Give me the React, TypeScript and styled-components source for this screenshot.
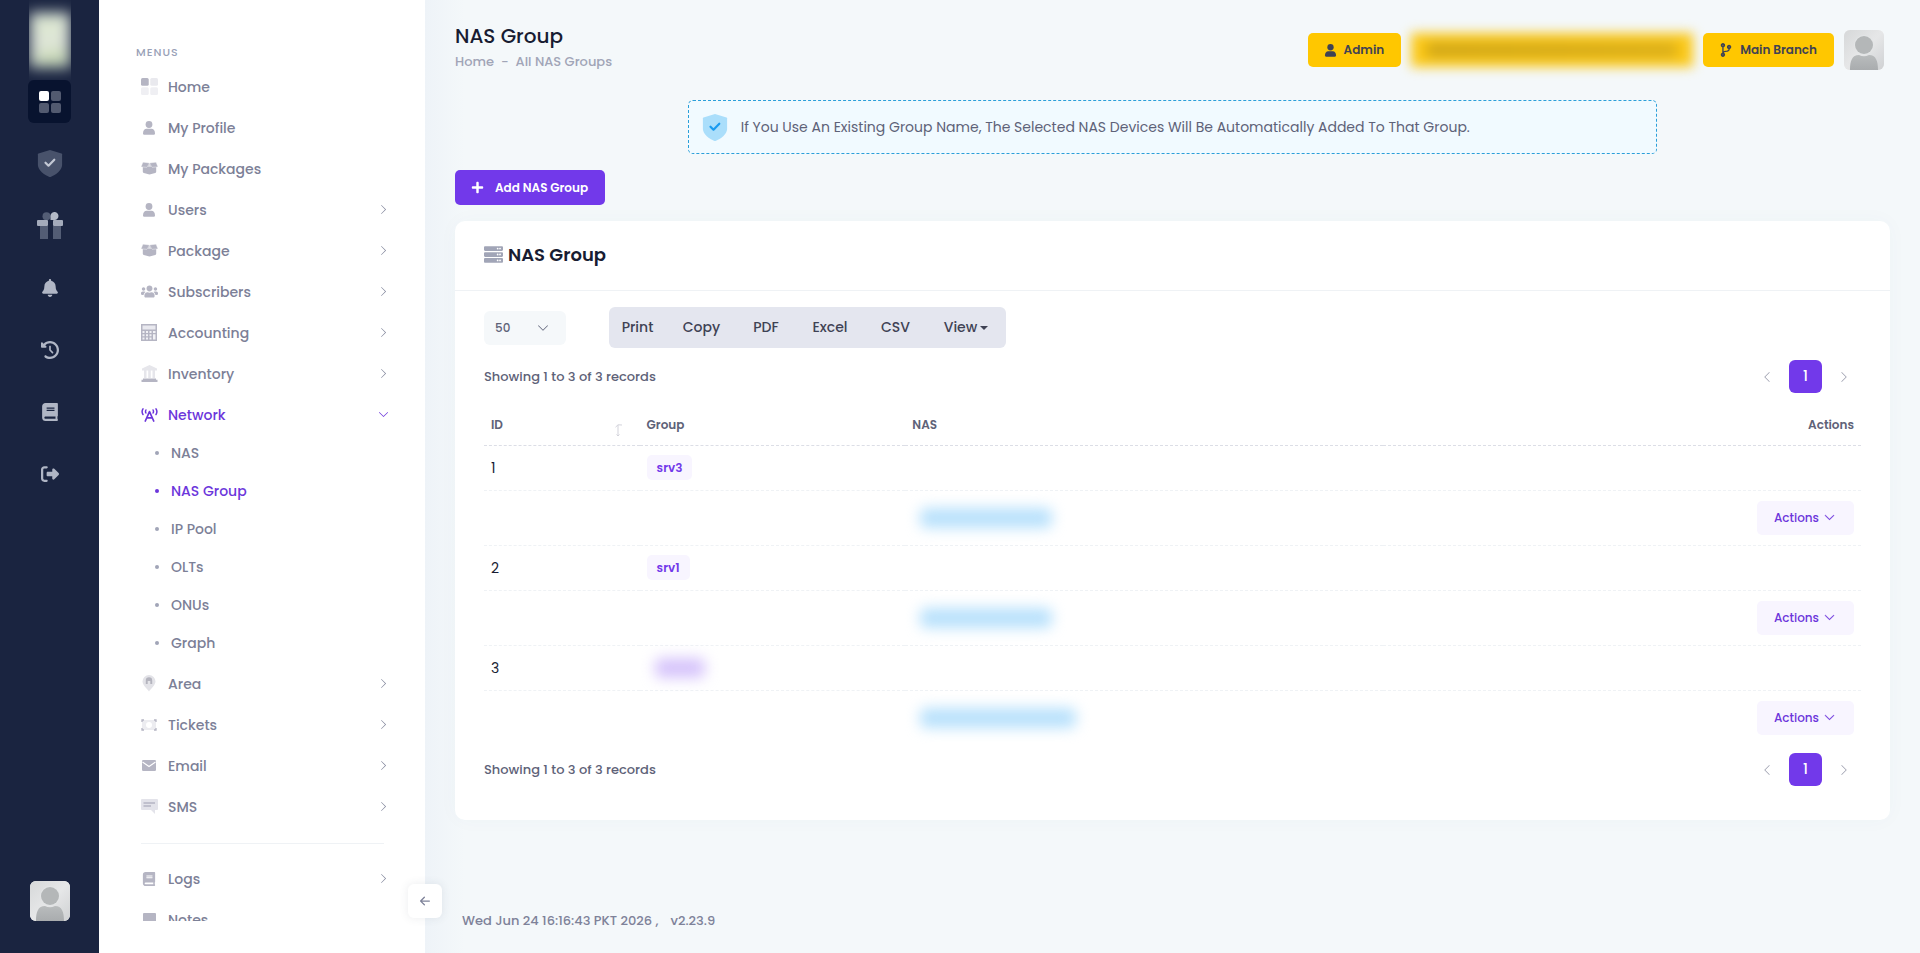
import React from "react";
import styled, { createGlobalStyle, css } from "styled-components";
import {
  FaBell,
  FaBook,
  FaCodeBranch,
  FaPlus,
  FaServer,
  FaUsers,
} from "react-icons/fa";
import { FaClockRotateLeft, FaRightFromBracket } from "react-icons/fa6";
import { BsArrowLeftShort, BsChevronDown, BsChevronLeft, BsChevronRight } from "react-icons/bs";

const GlobalStyle = createGlobalStyle`
  *, *::before, *::after { box-sizing: border-box; }
  body {
    margin: 0;
    background: #f4f8fa;
    color: #181c32;
    font-family: Poppins, Inter, "Liberation Sans", sans-serif;
    font-size: 14px;
    line-height: 20px;
  }
  button, select { font-family: inherit; }
  button { border: 0; cursor: pointer; }
  a { color: inherit; text-decoration: none; }
  ul { list-style: none; margin: 0; padding: 0; }
  h1, h2, p { margin: 0; }
  svg { display: block; flex: none; }
`;

/* ---------- icons ---------- */

type GridIconProps = { size: number; bright: string; dim: string; faint?: string };

const GridIcon = ({ size, bright, dim, faint = dim }: GridIconProps) => (
  <svg width={size} height={size} viewBox="0 0 22 22" aria-hidden="true">
    <rect width="10" height="10" rx="2" fill={bright} />
    <rect x="12" width="10" height="10" rx="2" fill={dim} />
    <rect y="12" width="10" height="10" rx="2" fill={faint} />
    <rect x="12" y="12" width="10" height="10" rx="2" fill={faint} />
  </svg>
);

const ShieldIcon = ({ base, tick }: { base: string; tick: string }) => (
  <svg width="26" height="27" viewBox="0 0 26 27" aria-hidden="true">
    <path d="M13 0 24.500 3.400q.6.2.6.8V15c0 5-6.500 10-11.500 12q-.6.2-1.200 0C7.400 25 .9 20 .9 15V4.200q0-.6.6-.8z" fill={base} />
    <path d="m8.500 12.700 3 3 5.800-6" fill="none" stroke={tick} strokeWidth="2.200" strokeLinecap="round" strokeLinejoin="round" />
  </svg>
);

const GiftIcon = () => (
  <svg width="26" height="28" viewBox="0 0 26 28" aria-hidden="true">
    <circle cx="9.500" cy="4.200" r="4" fill="#535d75" />
    <path d="M13.500 8V4.500A4 4 0 1 1 17.500 8z" fill="#b4bac8" />
    <path d="M3 14h8v13H3zM16 14h8v13h-8z" fill="#535d75" />
    <rect y="8" width="11" height="6" rx="1" fill="#a4abbb" />
    <rect x="16" y="8" width="10" height="6" rx="1" fill="#a4abbb" />
  </svg>
);

const UserIcon = ({ size = 14 }: { size?: number }) => (
  <svg width={size} height={size} viewBox="0 0 14 14" aria-hidden="true">
    <circle cx="7" cy="3.500" r="3.400" fill="currentColor" />
    <path d="M1 12.500C1 9.500 2.500 7.800 4.500 7.800h5c2 0 3.500 1.700 3.500 4.700q0 1.200-1.200 1.200H2.200Q1 13.700 1 12.500z" fill="currentColor" />
  </svg>
);

const OpenBoxIcon = () => (
  <svg width="17" height="13" viewBox="0 0 17 13" aria-hidden="true">
    <path d="M1.800 1.200h13.400v8.600q0 1-1 1.300l-4.700 1.200q-1 .3-2 0l-4.700-1.200q-1-.3-1-1.300z" fill="currentColor" />
    <path d="M.3 4.300 1.800.6q.2-.4.7-.4L8.500 1 6.300 4.900q-.3.6-.9.4L.6 4.900q-.5-.1-.3-.6zM16.700 4.300 15.200.6q-.2-.4-.7-.4L8.500 1l2.200 3.900q.3.600.9.4l4.800-.4q.5-.1.300-.6z" fill="currentColor" stroke="#fff" strokeWidth=".4" />
    <path d="M8.500 1.800 6.800 4.800h3.400z" fill="#fff" opacity=".6" />
  </svg>
);

const CalculatorIcon = () => (
  <svg width="16" height="17" viewBox="0 0 16 17" aria-hidden="true">
    <path d="M0 0h16v17H0z" fill="#b5b5c3" />
    <path d="M1.500 1.500h13v4h-13z" fill="#e9e9ef" />
    <path d="M1.500 7h2v2h-2zM5 7h2v2H5zM8.500 7h2v2h-2zM12 7h2.500v2H12zM1.500 10.300h2v2h-2zM5 10.300h2v2H5zM8.500 10.300h2v2h-2zM12 10.300h2.500v5.200H12zM1.500 13.500h2v2h-2zM5 13.500h2v2H5zM8.500 13.500h2v2h-2z" fill="#f1f1f5" />
  </svg>
);

const BankIcon = () => (
  <svg width="17" height="17" viewBox="0 0 17 17" aria-hidden="true">
    <path d="M8.500 0 16 3.500v2H1v-2zM3 5.500h2.500V13H3zM7.200 5.500h2.600V13H7.200zM11.500 5.500H14V13h-2.500z" fill="#e6e6eb" />
    <path d="M2 13.500h13v1.200h1.500V17H.5v-2.300H2z" fill="#b5b5c3" />
  </svg>
);

const TowerIcon = () => (
  <svg width="17" height="14" viewBox="0 0 17 14" aria-hidden="true" fill="none" stroke="currentColor" strokeWidth="1.700" strokeLinecap="round" strokeLinejoin="round">
    <path d="M4.300 13 8.500 3.600 12.700 13M6 9.800h5" />
    <path d="M2 .9Q.2 3.700 2 6.500M15 .9q1.800 2.800 0 5.600M4.900 2q-.8 1.500 0 3M12.100 2q.8 1.500 0 3" strokeWidth="1.500" />
  </svg>
);

const PinIcon = () => (
  <svg width="14" height="17" viewBox="0 0 14 17" aria-hidden="true">
    <path d="M7 0a6.500 6.500 0 0 1 6.500 6.500C13.500 10 9 13.500 7 16.500 5 13.500.5 10 .5 6.500A6.500 6.500 0 0 1 7 0z" fill="#e3e3e8" />
    <path d="M3.800 9V5.500a3.200 3.200 0 0 1 6.400 0V9H8.300V6H5.700v3z" fill="#b4b4be" />
  </svg>
);

const TicketIcon = () => (
  <svg width="16" height="12" viewBox="0 0 16 12" aria-hidden="true">
    <rect x="1" y="1" width="14" height="10" rx="1" fill="#ececf0" />
    <circle cx="8" cy="6" r="3" fill="#fff" />
    <path d="M1 3V1h2M13 1h2v2M15 9v2h-2M3 11H1V9" fill="none" stroke="#b5b5c3" strokeWidth="1.300" />
  </svg>
);

const MailIcon = () => (
  <svg width="14" height="11" viewBox="0 0 14 11" aria-hidden="true">
    <rect width="14" height="11" rx="1.200" fill="currentColor" />
    <path d="m.5 2 6.500 4.500L13.500 2" fill="none" stroke="#fff" strokeWidth="1.100" />
  </svg>
);

const MessageIcon = () => (
  <svg width="17" height="15" viewBox="0 0 17 15" aria-hidden="true">
    <path d="M1 0h15q1 0 1 1v9q0 1-1 1h-2v4l-4-4H1q-1 0-1-1V1q0-1 1-1z" fill="#e3e3ea" />
    <path d="M2.500 4H14M2.500 7H10" stroke="#b5b5c3" strokeWidth="1.300" />
  </svg>
);

const NoteIcon = () => (
  <svg width="13" height="13" viewBox="0 0 13 13" aria-hidden="true">
    <path d="M1 0h11q1 0 1 1v8l-4 4H1q-1 0-1-1V1q0-1 1-1z" fill="currentColor" />
  </svg>
);

const SortIcon = () => (
  <svg width="8" height="12" viewBox="0 0 8 12" aria-hidden="true">
    <path d="M3 12V1M.5 3.200 3 .8l4 .2M1.500 10.500 3 12l1.500-1.500" fill="none" stroke="#d3d3db" />
  </svg>
);

const PersonPicture = () => (
  <svg width="40" height="40" viewBox="0 0 40 40" role="img" aria-label="User">
    <defs>
      <linearGradient id="person-back" x1="0" y1="0" x2="1" y2="1">
        <stop offset="0" stopColor="#d6d8d9" />
        <stop offset=".5" stopColor="#e6e7e8" />
        <stop offset="1" stopColor="#cfd1d3" />
      </linearGradient>
      <linearGradient id="person-body" x1="0" y1="0" x2="0" y2="1">
        <stop offset="0" stopColor="#b9bcbd" />
        <stop offset="1" stopColor="#a9acae" />
      </linearGradient>
    </defs>
    <rect width="40" height="40" fill="url(#person-back)" />
    <path d="M6 40c0-9 2-15 9-15q5 2.500 10 0c7 0 9 6 9 15z" fill="url(#person-body)" />
    <circle cx="20" cy="15" r="10" fill="#e3e5e6" />
    <circle cx="20" cy="15" r="9" fill="#b4b7b8" />
  </svg>
);

/* ---------- frame ---------- */

const Shell = styled.div`
  display: flex;
  min-height: 100vh;
`;

const Rail = styled.nav`
  position: sticky;
  top: 0;
  flex: none;
  display: flex;
  flex-direction: column;
  align-items: center;
  width: 99px;
  height: 100vh;
  padding-bottom: 32px;
  background: #1a2440;
`;

const LogoFrame = styled.div`
  width: 42px;
  height: 80px;
  padding: 16px 4px;
  overflow: hidden;
`;

const Logo = styled.div`
  height: 48px;
  background: linear-gradient(170deg, #dce8cf 10%, #dfe5d9 60%, #b9d29c);
  filter: blur(7px);
  box-shadow: 0 0 0 4px #b9c0c8;
`;

const RailList = styled.ul`
  display: flex;
  flex-direction: column;
  gap: 19px;
`;

const RailButton = styled.button<{ $active?: boolean }>`
  display: flex;
  align-items: center;
  justify-content: center;
  width: 43px;
  height: 43px;
  padding: 0;
  border-radius: 6px;
  background: ${(p) => (p.$active ? "#08132f" : "transparent")};
  color: #b0b6c5;
`;

const Avatar = styled.button<{ $bottom?: boolean }>`
  flex: none;
  width: 40px;
  height: 40px;
  margin-top: ${(p) => (p.$bottom ? "auto" : "0")};
  padding: 0;
  border-radius: 6px;
  overflow: hidden;
`;

const Side = styled.aside`
  position: sticky;
  top: 0;
  flex: none;
  width: 326px;
  height: 100vh;
  padding: 42px 32px 32px 37px;
  background: #fff;
`;

const SideScroll = styled.div`
  height: 100%;
  overflow: hidden;
`;

const MenuTitle = styled.p`
  margin-bottom: 4px;
  color: #99a1b7;
  font-size: 11px;
  font-weight: 500;
  letter-spacing: 1px;
`;

const menuRow = css<{ $active?: boolean }>`
  display: flex;
  align-items: center;
  color: ${(p) => (p.$active ? "#6c36db" : "#7c8097")};
  font-weight: 500;
`;

const MenuLink = styled.a<{ $active?: boolean }>`
  ${menuRow}
  height: 41px;
  padding: 0 4px 0 2px;
`;

const MenuIcon = styled.span<{ $active?: boolean }>`
  display: flex;
  justify-content: center;
  width: 22px;
  margin-right: 8px;
  color: ${(p) => (p.$active ? "#6c36db" : "#b5b5c3")};
`;

const MenuArrow = styled.span`
  display: flex;
  margin-left: auto;
`;

const SubList = styled.ul`
  margin-top: -1px;
  padding-bottom: 1px;
`;

const SubLink = styled.a<{ $active?: boolean }>`
  ${menuRow}
  height: 38px;
  padding-left: 19px;

  &::before {
    content: "";
    width: 4px;
    height: 4px;
    margin-right: 12px;
    border-radius: 50%;
    background: ${(p) => (p.$active ? "#6c36db" : "#a1a5b7")};
  }
`;

const MenuRule = styled.li`
  height: 1px;
  margin: 16px 9px 14px 5px;
  background: #eff2f5;
`;

const CollapseButton = styled.button`
  position: absolute;
  right: -17px;
  bottom: 35px;
  z-index: 2;
  display: flex;
  align-items: center;
  justify-content: center;
  width: 34px;
  height: 34px;
  padding: 0;
  border-radius: 6px;
  background: #fff;
  color: #7e8299;
  box-shadow: 0 0 10px rgba(60, 66, 90, 0.1);
`;

const Main = styled.main`
  flex: 1;
  min-width: 0;
  display: flex;
  flex-direction: column;
  padding: 24px 30px 22px;
  background: linear-gradient(90deg, #eef3f8, #f4f8fa 40px);
`;

/* ---------- page head ---------- */

const TopBar = styled.header`
  display: flex;
  align-items: flex-start;
  justify-content: space-between;
  height: 76px;
`;

const PageTitle = styled.h1`
  font-size: 20px;
  font-weight: 500;
  line-height: 24px;
`;

const Crumbs = styled.nav`
  display: flex;
  gap: 7px;
  margin-top: 4px;
  color: #a1a5b7;
  font-size: 13px;
  font-weight: 500;
`;

const TopActions = styled.div`
  display: flex;
  align-items: center;
  gap: 10px;
  margin: 6px 6px 0 0;
`;

const YellowButton = styled.button`
  display: flex;
  align-items: center;
  gap: 7px;
  height: 34px;
  padding: 0 17px 0 16px;
  border-radius: 5px;
  background: #ffc700;
  color: #3f4254;
  font-size: 12px;
  font-weight: 600;
`;

const HiddenButton = styled.div`
  display: flex;
  align-items: center;
  width: 282px;
  height: 34px;
  padding: 0 16px;
  background: #fbc817;
  filter: blur(6px);

  &::before {
    content: "";
    flex: 1;
    height: 14px;
    background: linear-gradient(90deg, #cfa61a, #d9ae1c);
    filter: blur(2px);
  }
`;

const Notice = styled.div`
  display: flex;
  align-items: center;
  gap: 13px;
  align-self: center;
  width: calc(66.66% + 13px);
  min-height: 54px;
  padding: 0 13px;
  border: 1px dashed #2b9fd9;
  border-radius: 5px;
  background: #f1faff;
  color: #5e6278;
`;

const AddButton = styled.button`
  display: flex;
  align-items: center;
  align-self: flex-start;
  gap: 11px;
  height: 35px;
  margin: 16px 0;
  padding: 0 17px 0 16px;
  border-radius: 5px;
  background: #7239ea;
  color: #fff;
  font-size: 12px;
  font-weight: 600;
`;

/* ---------- card ---------- */

const Card = styled.section`
  border-radius: 10px;
  background: #fff;
  box-shadow: 0 0 20px rgba(76, 87, 125, 0.03);
`;

const CardHead = styled.div`
  display: flex;
  align-items: center;
  gap: 5px;
  height: 70px;
  padding: 0 29px 2px;
  border-bottom: 1px solid #eff2f5;
  color: #a1a5b7;
`;

const CardTitle = styled.h2`
  color: #181c32;
  font-size: 18px;
  font-weight: 600;
`;

const CardBody = styled.div`
  padding: 16px 29px 34px;
`;

const Tools = styled.div`
  display: flex;
  align-items: center;
  gap: 43px;
`;

const SizeBox = styled.label`
  position: relative;
  display: flex;
  align-items: center;
  color: #5e6278;

  svg {
    position: absolute;
    right: 17px;
    pointer-events: none;
  }
`;

const SizeSelect = styled.select`
  appearance: none;
  width: 82px;
  height: 34px;
  padding: 0 11px;
  border: 0;
  border-radius: 6px;
  background: #f5f8fa;
  color: #5e6278;
  font-size: 12px;
  font-weight: 500;
`;

const ExportGroup = styled.div`
  display: flex;
  height: 41px;
  border-radius: 6px;
  background: #e4e6ef;
  overflow: hidden;
`;

const ExportButton = styled.button<{ $width: number }>`
  display: flex;
  align-items: center;
  justify-content: center;
  gap: 3px;
  width: ${(p) => p.$width}px;
  padding: 0;
  background: transparent;
  color: #3f4254;
  font-size: 14px;
  font-weight: 500;
`;

const Caret = styled.span`
  border: 4px solid transparent;
  border-top-color: currentColor;
  border-bottom: 0;
`;

const RecordRow = styled.div<{ $bottom?: boolean }>`
  display: flex;
  align-items: center;
  justify-content: space-between;
  height: 33px;
  margin: ${(p) => (p.$bottom ? "8px 0 0" : "12px 0")};
  padding-right: 5px;
  color: #5e6278;
  font-size: 13px;
  font-weight: 500;
`;

const Pager = styled.div`
  display: flex;
  align-items: center;
  gap: 10px;
`;

const PageButton = styled.button<{ $current?: boolean }>`
  display: flex;
  align-items: center;
  justify-content: center;
  width: ${(p) => (p.$current ? 33 : 24)}px;
  height: 33px;
  padding: 0;
  border-radius: 6px;
  background: ${(p) => (p.$current ? "#7239ea" : "transparent")};
  color: ${(p) => (p.$current ? "#fff" : "#9a9dac")};
  font-size: 14px;
  font-weight: 500;
`;

const Table = styled.table`
  width: 100%;
  border-collapse: collapse;
  table-layout: fixed;
`;

const HeadCell = styled.th<{ $width?: string; $right?: boolean }>`
  width: ${(p) => p.$width ?? "auto"};
  height: 40px;
  padding: 0 7px;
  border-bottom: 1px dashed #dcdee6;
  color: #5e6278;
  font-size: 12px;
  font-weight: 600;
  text-align: ${(p) => (p.$right ? "right" : "left")};
`;

const SortHead = styled.span`
  display: flex;
  align-items: center;
  justify-content: space-between;
  padding-right: 10px;

  svg {
    margin-top: 10px;
  }
`;

const Cell = styled.td<{ $tall?: boolean }>`
  height: ${(p) => (p.$tall ? 55 : 45)}px;
  padding: 0 7px;
  border-bottom: 1px dashed #eff2f5;

  tr:last-child > & {
    border-bottom: 0;
  }
`;

const Tag = styled.span`
  display: inline-flex;
  align-items: center;
  height: 25px;
  padding: 0 10px;
  border-radius: 5px;
  background: #f8f5ff;
  color: #7239ea;
  font-size: 12px;
  font-weight: 600;
`;

const HiddenTag = styled.span<{ $width: number; $tone: string }>`
  display: block;
  width: ${(p) => p.$width}px;
  height: 20px;
  margin-left: 8px;
  border-radius: 6px;
  background: ${(p) => p.$tone};
  filter: blur(7px);
`;

const ActionButton = styled.button`
  display: flex;
  align-items: center;
  gap: 5px;
  height: 34px;
  margin-left: auto;
  padding: 0 19px 0 17px;
  border-radius: 5px;
  background: #f8f5ff;
  color: #6c36db;
  font-size: 12px;
  font-weight: 500;

  svg {
    stroke: currentColor;
    stroke-width: 0.5px;
  }
`;

const Footer = styled.footer`
  display: flex;
  gap: 12px;
  margin-top: auto;
  padding-left: 7px;
  color: #7e8299;
  font-size: 13px;
  font-weight: 500;
`;

/* ---------- data ---------- */

type Item = { label: string; icon: React.ReactNode; leaf?: boolean; active?: boolean };

const upperItems: Item[] = [
  { label: "Home", icon: <GridIcon size={17} bright="#b5b5c3" dim="#e9e9ee" faint="#efeff3" />, leaf: true },
  { label: "My Profile", icon: <UserIcon />, leaf: true },
  { label: "My Packages", icon: <OpenBoxIcon />, leaf: true },
  { label: "Users", icon: <UserIcon /> },
  { label: "Package", icon: <OpenBoxIcon /> },
  { label: "Subscribers", icon: <FaUsers size={17} /> },
  { label: "Accounting", icon: <CalculatorIcon /> },
  { label: "Inventory", icon: <BankIcon /> },
  { label: "Network", icon: <TowerIcon />, active: true },
];

const networkPages = ["NAS", "NAS Group", "IP Pool", "OLTs", "ONUs", "Graph"];

const lowerItems: Item[] = [
  { label: "Area", icon: <PinIcon /> },
  { label: "Tickets", icon: <TicketIcon /> },
  { label: "Email", icon: <MailIcon /> },
  { label: "SMS", icon: <MessageIcon /> },
];

const logItems: Item[] = [
  { label: "Logs", icon: <FaBook size={14} /> },
  { label: "Notes", icon: <NoteIcon />, leaf: true },
];

const railItems = [
  { label: "Dashboard", icon: <GridIcon size={22} bright="#fff" dim="#525a70" />, active: true },
  { label: "Security", icon: <ShieldIcon base="#48526b" tick="#c3c8d4" /> },
  { label: "Packages", icon: <GiftIcon /> },
  { label: "Notifications", icon: <FaBell size={18} /> },
  { label: "History", icon: <FaClockRotateLeft size={18} /> },
  { label: "Guide", icon: <FaBook size={18} /> },
  { label: "Sign out", icon: <FaRightFromBracket size={18} /> },
];

const groups = [
  { id: 1, name: "srv3", nasWidth: 132 },
  { id: 2, name: "srv1", nasWidth: 132 },
  { id: 3, name: null, nasWidth: 156 },
];

const exportButtons = [
  { label: "Print", width: 57 },
  { label: "Copy", width: 71 },
  { label: "PDF", width: 58 },
  { label: "Excel", width: 70 },
  { label: "CSV", width: 61 },
  { label: "View", width: 80 },
];

/* ---------- parts ---------- */

const MenuEntry = ({ item }: { item: Item }) => (
  <li>
    <MenuLink href="#" $active={item.active}>
      <MenuIcon $active={item.active}>{item.icon}</MenuIcon>
      {item.label}
      {!item.leaf && (
        <MenuArrow>{item.active ? <BsChevronDown size={11} /> : <BsChevronRight size={11} />}</MenuArrow>
      )}
    </MenuLink>
  </li>
);

const Records = ({ bottom }: { bottom?: boolean }) => (
  <RecordRow $bottom={bottom}>
    <p>Showing 1 to 3 of 3 records</p>
    <Pager>
      <PageButton aria-label="Previous page"><BsChevronLeft size={12} /></PageButton>
      <PageButton $current>1</PageButton>
      <PageButton aria-label="Next page"><BsChevronRight size={12} /></PageButton>
    </Pager>
  </RecordRow>
);

export default function App() {
  return (
    <>
      <GlobalStyle />
      <Shell>
        <Rail>
          <LogoFrame><Logo /></LogoFrame>
          <RailList>
            {railItems.map((item) => (
              <li key={item.label}>
                <RailButton aria-label={item.label} $active={item.active}>{item.icon}</RailButton>
              </li>
            ))}
          </RailList>
          <Avatar $bottom aria-label="Profile"><PersonPicture /></Avatar>
        </Rail>

        <Side>
          <SideScroll>
            <MenuTitle>MENUS</MenuTitle>
            <ul>
              {upperItems.map((item) => <MenuEntry key={item.label} item={item} />)}
              <li>
                <SubList>
                  {networkPages.map((page) => (
                    <li key={page}>
                      <SubLink href="#" $active={page === "NAS Group"}>{page}</SubLink>
                    </li>
                  ))}
                </SubList>
              </li>
              {lowerItems.map((item) => <MenuEntry key={item.label} item={item} />)}
              <MenuRule role="separator" />
              {logItems.map((item) => <MenuEntry key={item.label} item={item} />)}
            </ul>
          </SideScroll>
          <CollapseButton aria-label="Collapse menu"><BsArrowLeftShort size={20} /></CollapseButton>
        </Side>

        <Main>
          <TopBar>
            <div>
              <PageTitle>NAS Group</PageTitle>
              <Crumbs>
                <a href="#">Home</a>
                <span>-</span>
                <a href="#">All NAS Groups</a>
              </Crumbs>
            </div>
            <TopActions>
              <YellowButton><UserIcon size={13} />Admin</YellowButton>
              <HiddenButton />
              <YellowButton><FaCodeBranch size={14} />Main Branch</YellowButton>
              <Avatar aria-label="Account"><PersonPicture /></Avatar>
            </TopActions>
          </TopBar>

          <Notice>
            <ShieldIcon base="#aadefb" tick="#1a9bf0" />
            <p>If You Use An Existing Group Name, The Selected NAS Devices Will Be Automatically Added To That Group.</p>
          </Notice>

          <AddButton><FaPlus size={13} />Add NAS Group</AddButton>

          <Card>
            <CardHead>
              <FaServer size={19} />
              <CardTitle>NAS Group</CardTitle>
            </CardHead>
            <CardBody>
              <Tools>
                <SizeBox>
                  <SizeSelect aria-label="Records per page" defaultValue="50">
                    <option>50</option>
                    <option>100</option>
                  </SizeSelect>
                  <BsChevronDown size={12} />
                </SizeBox>
                <ExportGroup>
                  {exportButtons.map((b) => (
                    <ExportButton key={b.label} $width={b.width}>
                      {b.label}
                      {b.label === "View" && <Caret />}
                    </ExportButton>
                  ))}
                </ExportGroup>
              </Tools>

              <Records />

              <Table>
                <thead>
                  <tr>
                    <HeadCell $width="11.3%"><SortHead>ID<SortIcon /></SortHead></HeadCell>
                    <HeadCell $width="19.3%">Group</HeadCell>
                    <HeadCell>NAS</HeadCell>
                    <HeadCell $right>Actions</HeadCell>
                  </tr>
                </thead>
                <tbody>
                  {groups.map((g) => (
                    <React.Fragment key={g.id}>
                      <tr>
                        <Cell>{g.id}</Cell>
                        <Cell>{g.name ? <Tag>{g.name}</Tag> : <HiddenTag $width={50} $tone="#d6c4fb" />}</Cell>
                        <Cell />
                        <Cell />
                      </tr>
                      <tr>
                        <Cell $tall />
                        <Cell $tall />
                        <Cell $tall><HiddenTag $width={g.nasWidth} $tone="#b8e1fc" /></Cell>
                        <Cell $tall><ActionButton>Actions<BsChevronDown size={11} /></ActionButton></Cell>
                      </tr>
                    </React.Fragment>
                  ))}
                </tbody>
              </Table>

              <Records bottom />
            </CardBody>
          </Card>

          <Footer>
            <span>Wed Jun 24 16:16:43 PKT 2026 ,</span>
            <span>v2.23.9</span>
          </Footer>
        </Main>
      </Shell>
    </>
  );
}
